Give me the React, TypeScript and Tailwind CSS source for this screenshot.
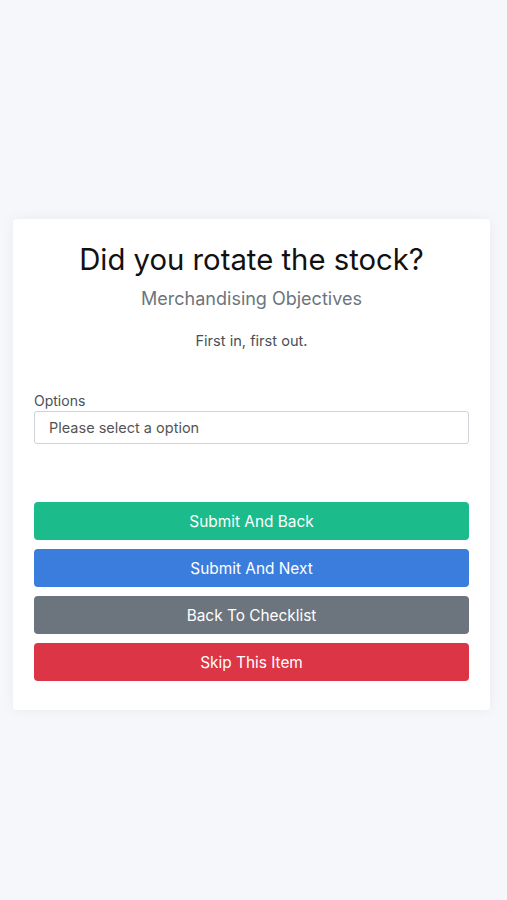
export default function App() {
  const buttons = [
    { label: "Submit And Back", cls: "bg-[#1cbb8c]" },
    { label: "Submit And Next", cls: "bg-[#3b7ddd]" },
    { label: "Back To Checklist", cls: "bg-[#6c757d]" },
    { label: "Skip This Item", cls: "bg-[#dc3545]" },
  ];

  return (
    <div
      className="min-h-screen bg-[#f5f7fb] pt-[219px] text-[#495057]"
      style={{ fontFamily: "Inter, 'Noto Sans', sans-serif" }}
    >
      <div className="ml-[13px] w-[477px] rounded bg-white px-[21px] pt-[23px] pb-[29px] shadow-[0_0_14px_0_rgba(33,37,41,0.05)]">
        <h1 className="text-center text-[29.3px] leading-[36px] font-normal text-[#111]">
          Did you rotate the stock?
        </h1>
        <h2 className="mt-[7px] text-center text-[18px] leading-[27px] text-[#6c757d]">
          Merchandising Objectives
        </h2>
        <p className="mt-[19px] text-center text-[14.6px] leading-[21px]">First in, first out.</p>

        <label className="mt-[38px] block text-sm leading-[21px]">Options</label>
        <div className="flex h-[33px] items-center rounded-[3px] border border-[#ced4da] pl-[14px] text-[14.5px] text-[#555]">
          Please select a option
        </div>

        <div className="mt-[58px] flex flex-col gap-[9px]">
          {buttons.map((b) => (
            <button
              key={b.label}
              className={`h-[38px] w-full rounded-[4px] pt-px text-center text-[15.4px] text-white ${b.cls}`}
            >
              {b.label}
            </button>
          ))}
        </div>
      </div>
    </div>
  );
}
